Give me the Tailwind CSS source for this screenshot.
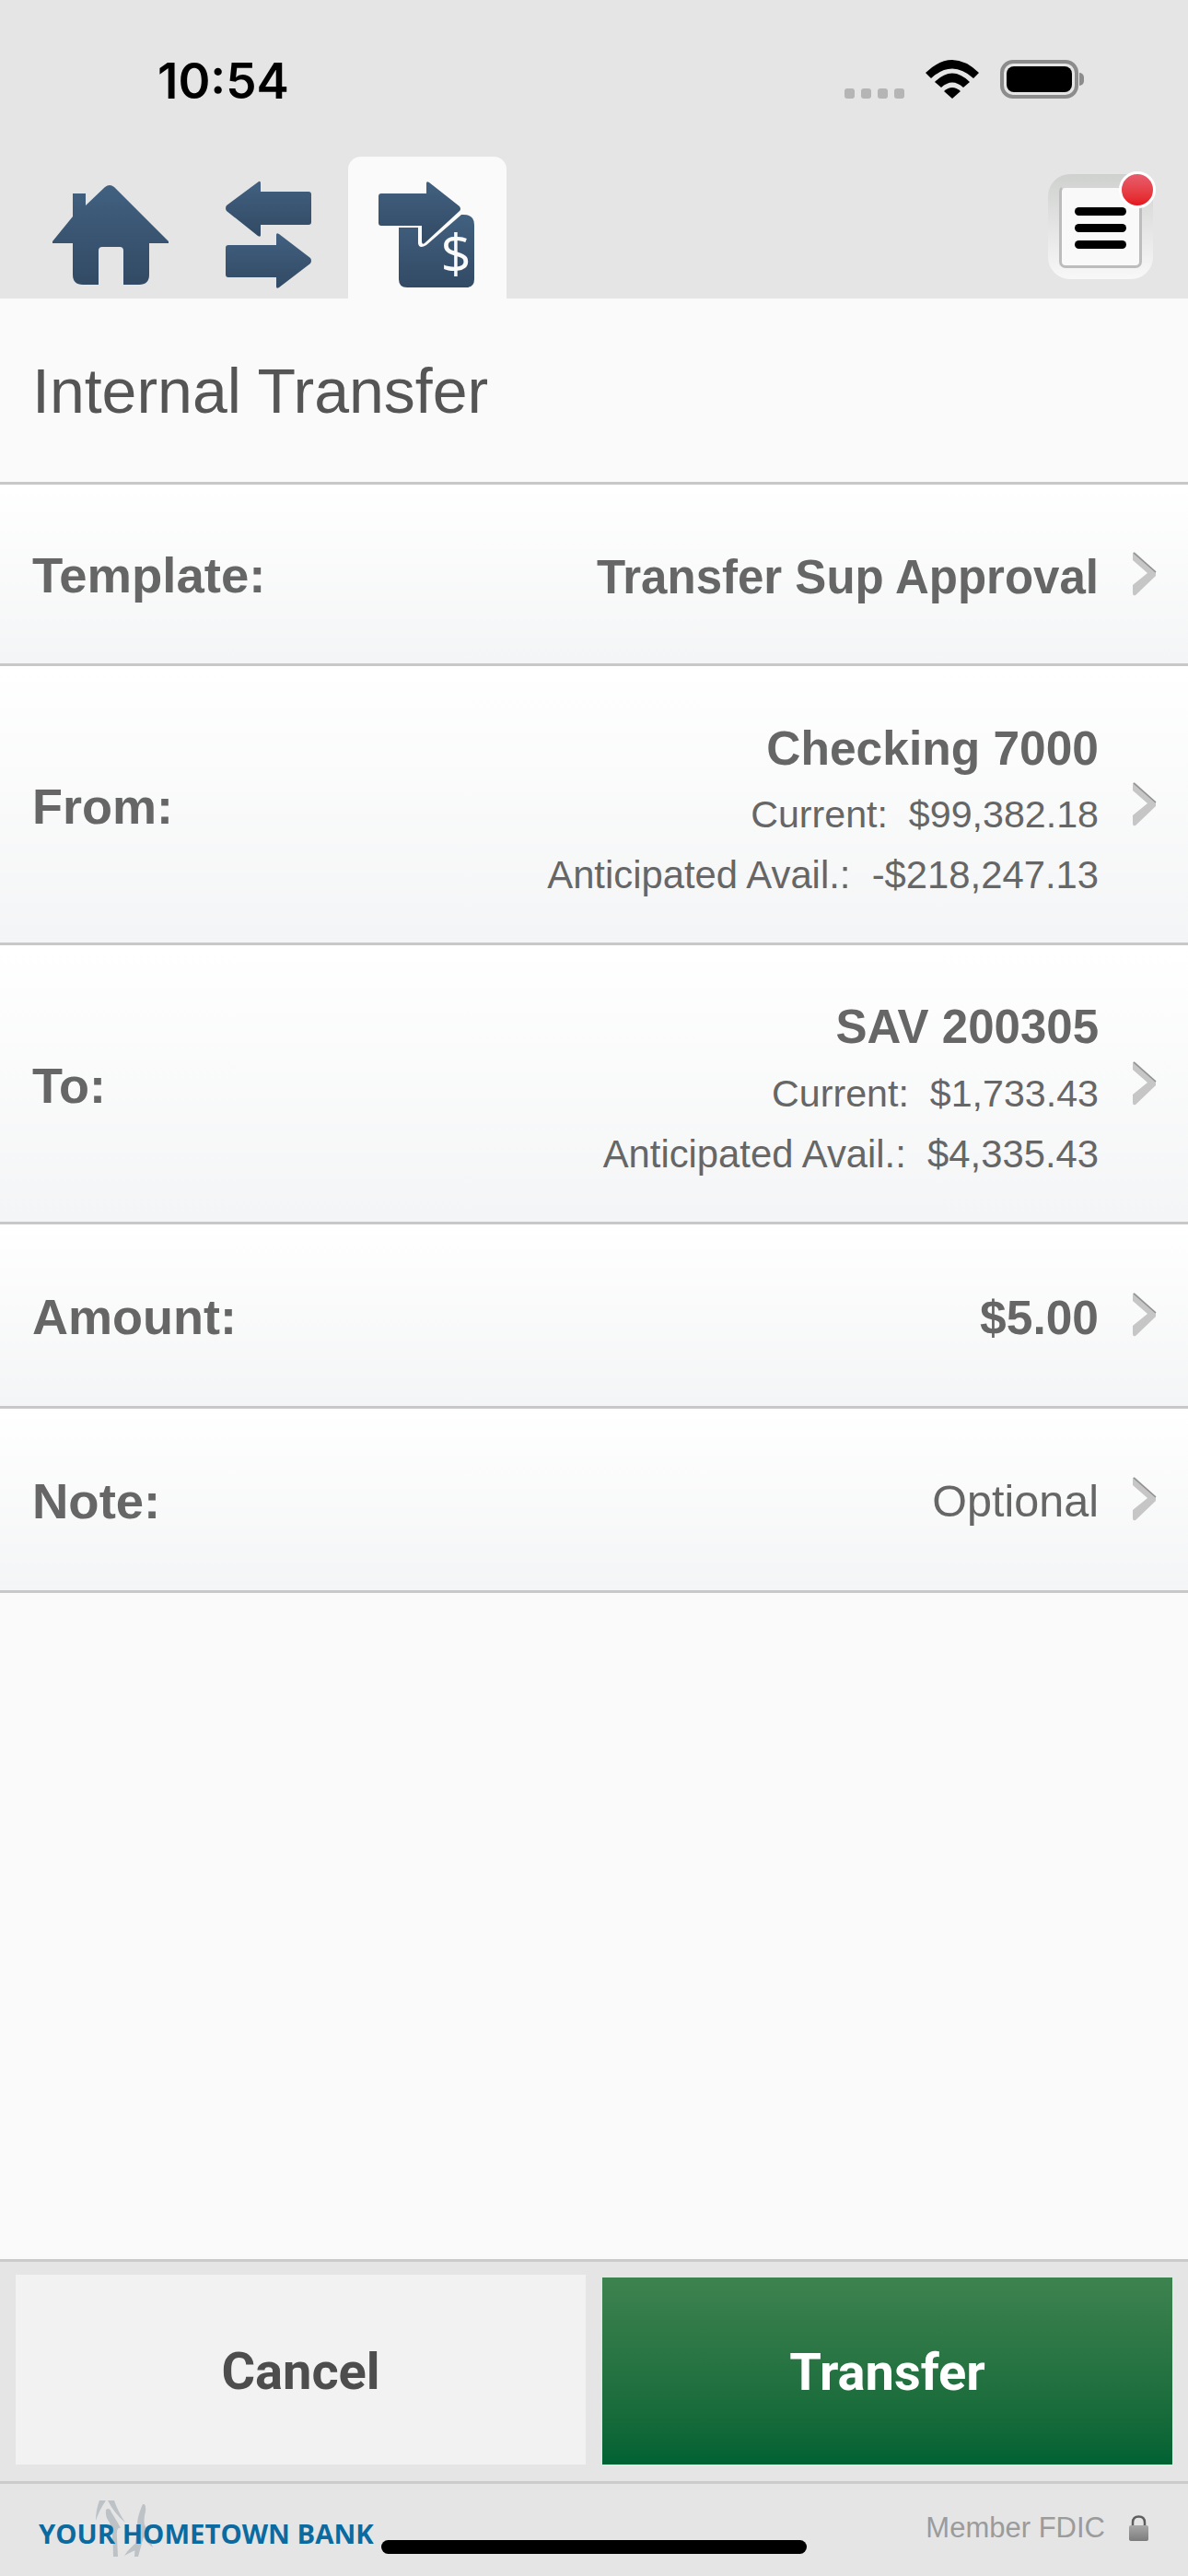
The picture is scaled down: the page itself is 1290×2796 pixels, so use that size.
<!DOCTYPE html>
<html lang="en">
<head>
  <meta charset="UTF-8" />
  <meta name="viewport" content="width=device-width, initial-scale=1.0" />
  <title>Internal Transfer</title>
  <script src="https://cdn.jsdelivr.net/npm/@tailwindcss/browser@4"></script>
</head>
<body class="font-['Liberation_Sans',Arial,sans-serif] text-[#666666] bg-[#fafafa] overflow-hidden">
<div class="relative w-[1290px] h-[2796px] flex flex-col">

  <!-- shared gradient -->
  <svg width="0" height="0" class="absolute">
    <defs>
      <linearGradient id="navy" x1="0" y1="0" x2="0" y2="1">
        <stop offset="0" stop-color="#416080" />
        <stop offset="1" stop-color="#324a64" />
      </linearGradient>
      <linearGradient id="lockfill" x1="0" y1="0" x2="0" y2="1">
        <stop offset="0" stop-color="#a8a8a8" />
        <stop offset="1" stop-color="#7c7c7c" />
      </linearGradient>
      <symbol id="chevron" viewBox="0 0 27 48">
        <path fill="#c6c6c6" d="M0 3 Q0 -1 3 1 L25 21 V26 L3 47 Q0 48 0 45 V36 L16 23 L0 9 Z" />
        <path fill="none" stroke="#909090" stroke-width="1.5" d="M1 1 L25 22" />
      </symbol>
    </defs>
  </svg>

  <!-- status bar + nav -->
  <header class="h-[324px] bg-[#e5e5e5] flex flex-col shrink-0">
    <div class="h-[178px] pl-[171px] pr-[113px] flex justify-between items-start">
      <span class="mt-[60px] font-['Inter',sans-serif] text-[53px] leading-[56px] font-semibold text-black">10:54</span>
      <div class="mt-[65px] flex items-end">
        <div class="flex gap-[7px] mb-0">
          <i class="block w-[11px] h-[11px] rounded-[3px] bg-[#b5b5b5]"></i>
          <i class="block w-[11px] h-[11px] rounded-[3px] bg-[#b5b5b5]"></i>
          <i class="block w-[11px] h-[11px] rounded-[3px] bg-[#b5b5b5]"></i>
          <i class="block w-[11px] h-[11px] rounded-[3px] bg-[#b5b5b5]"></i>
        </div>
        <svg class="ml-[23px]" width="58" height="42" viewBox="0 0 58 42">
          <path d="M0 14 Q29 -14 58 14 L52 20 Q29 -1 6 20 Z" fill="#000" />
          <path d="M10 24 Q29 5 48 24 L41 30 Q29 19 17 30 Z" fill="#000" />
          <path d="M20 34 Q29 26 38 34 L29 42 Z" fill="#000" />
        </svg>
        <div class="ml-[23px] flex items-center">
          <div class="w-[85px] h-[42px] rounded-[14px] border-[4px] border-[#8c8c8c] p-[3px]">
            <div class="w-full h-full rounded-[8px] bg-black"></div>
          </div>
          <div class="w-[5px] h-[14px] rounded-r-[5px] bg-[#8c8c8c] ml-[1px]"></div>
        </div>
      </div>
    </div>

    <nav class="flex-1 flex items-end pl-[57px] pr-[38px] relative">
      <!-- home -->
      <svg class="mb-[14px]" width="126" height="110" viewBox="0 0 126 110">
        <path fill="url(#navy)" d="M22 10 H36 V23 L57 3 Q62 -1 67 3 L126 62 V64 H105 V98 Q105 109 94 109 H77 V72 Q77 68 73 68 H54 Q50 68 50 72 V109 H33 Q22 109 22 98 V64 H0 V62 L22 35 Z" />
      </svg>
      <!-- transfers -->
      <svg class="ml-[62px] mb-[10px]" width="94" height="118" viewBox="0 0 94 118">
        <g fill="url(#navy)">
          <path d="M1 27 L36 1 Q38 0 38 3 V12 H90 Q93 12 93 15 V45 Q93 48 90 48 H38 V59 Q38 62 35 60 L1 33 Q-1 30 1 27 Z" />
          <path d="M3 70 H55 V59 Q55 56 58 58 L92 84 Q94 87 92 90 L58 116 Q55 118 55 115 V105 H3 Q0 105 0 102 V73 Q0 70 3 70 Z" />
        </g>
      </svg>
      <!-- active tab -->
      <div class="ml-[39px] w-[172px] h-[154px] bg-[#fafafa] rounded-t-[14px] flex justify-center items-end pb-[10px]">
        <svg width="106" height="118" viewBox="0 0 106 118">
          <g fill="url(#navy)">
            <path d="M3 14 H52 V3 Q52 0 55 2 L88 28 Q90 31 88 33 L50 68 Q47 70 47 66 V49 H3 Q0 49 0 46 V17 Q0 14 3 14 Z" />
            <path d="M22 51 H43 V68 Q44 75 52 70 L90 37 Q104 36 104 48 V107 Q104 116 95 116 H31 Q22 116 22 107 Z" />
          </g>
          <text x="84" y="101" text-anchor="middle" font-family="Open Sans" font-size="58" fill="#fafafa">$</text>
        </svg>
      </div>
      <!-- menu button -->
      <div class="ml-auto mb-[21px] relative w-[114px] h-[114px] rounded-[24px] bg-gradient-to-b from-[#cfd1cf] to-[#f8f8f8] p-[12px]">
        <div class="w-full h-full rounded-[7px] border-[3px] border-[#bcbcbc] border-t-[#d4d5d4] bg-[#f9f9f9] flex flex-col justify-center items-center gap-[9px] pt-[2px]">
          <i class="block w-[56px] h-[9px] rounded-full bg-black"></i>
          <i class="block w-[56px] h-[9px] rounded-full bg-black"></i>
          <i class="block w-[56px] h-[9px] rounded-full bg-black"></i>
        </div>
        <span class="absolute -top-[3px] -right-[3px] w-[40px] h-[40px] rounded-full border-[3px] border-white bg-gradient-to-b from-[#e75c6c] to-[#e5121c]"></span>
      </div>
    </nav>
  </header>

  <!-- form -->
  <main class="flex-1 flex flex-col">
    <div class="h-[202px] flex items-center px-[35px] border-b-[3px] border-[#c8c8c8] bg-[#fafafa]">
      <h1 class="text-[68px] leading-none font-normal text-[#555555]">Internal Transfer</h1>
    </div>

    <div class="h-[197px] flex items-center pt-[4px] pl-[35px] pr-[33px] border-b-[3px] border-[#c8c8c8] bg-gradient-to-b from-white to-[#f4f5f6]">
      <span class="text-[54.5px] font-bold">Template:</span>
      <span class="ml-auto mt-[4px] text-[51px] font-bold">Transfer Sup Approval</span>
      <svg class="ml-[37px] mb-[5px]" width="27" height="48"><use href="#chevron" /></svg>
    </div>

    <div class="h-[303px] flex items-center pt-[4px] pl-[35px] pr-[33px] border-b-[3px] border-[#c8c8c8] bg-gradient-to-b from-white to-[#f4f5f6]">
      <span class="text-[54px] font-bold">From:</span>
      <div class="ml-auto mt-[13px] text-right">
        <div class="text-[51.5px] leading-[60px] font-bold">Checking 7000</div>
        <div class="text-[41.2px] leading-[66px] mt-[9px] whitespace-pre">Current:  $99,382.18</div>
        <div class="text-[41.8px] leading-[65px] whitespace-pre">Anticipated Avail.:  -$218,247.13</div>
      </div>
      <svg class="ml-[37px] mb-[5px]" width="27" height="48"><use href="#chevron" /></svg>
    </div>

    <div class="h-[303px] flex items-center pt-[4px] pl-[35px] pr-[33px] border-b-[3px] border-[#c8c8c8] bg-gradient-to-b from-white to-[#f4f5f6]">
      <span class="text-[54px] font-bold">To:</span>
      <div class="ml-auto mt-[13px] text-right">
        <div class="text-[51px] leading-[60px] font-bold">SAV 200305</div>
        <div class="text-[41.2px] leading-[66px] mt-[9px] whitespace-pre">Current:  $1,733.43</div>
        <div class="text-[41.8px] leading-[65px] whitespace-pre">Anticipated Avail.:  $4,335.43</div>
      </div>
      <svg class="ml-[37px] mb-[5px]" width="27" height="48"><use href="#chevron" /></svg>
    </div>

    <div class="h-[200px] flex items-center pt-[4px] pl-[35px] pr-[33px] border-b-[3px] border-[#c8c8c8] bg-gradient-to-b from-white to-[#f4f5f6]">
      <span class="text-[54px] font-bold">Amount:</span>
      <span class="ml-auto mt-[2px] text-[51.5px] font-bold">$5.00</span>
      <svg class="ml-[37px] mb-[5px]" width="27" height="48"><use href="#chevron" /></svg>
    </div>

    <div class="h-[200px] flex items-center pt-[4px] pl-[35px] pr-[33px] border-b-[3px] border-[#c8c8c8] bg-gradient-to-b from-white to-[#f4f5f6]">
      <span class="text-[54.5px] font-bold">Note:</span>
      <span class="ml-auto text-[48.5px]">Optional</span>
      <svg class="ml-[37px] mb-[5px]" width="27" height="48"><use href="#chevron" /></svg>
    </div>
  </main>

  <!-- actions -->
  <div class="h-[244px] shrink-0 bg-[#e5e5e5] border-y-[3px] border-[#cbcbcb] pl-[17px] pr-[17px] flex gap-[18px] pt-[14px] font-['Roboto',sans-serif] text-[56px] font-bold">
    <button class="w-[619px] h-[206px] pt-[3px] bg-[#f2f2f2] text-[#4d4d4d]">Cancel</button>
    <button class="w-[619px] h-[203px] mt-[3px] pt-[3px] text-white bg-gradient-to-b from-[#3d8350] to-[#006233]">Transfer</button>
  </div>

  <!-- footer -->
  <footer class="h-[100px] shrink-0 bg-[#e5e5e5] relative flex items-start pl-[42px] pr-[43px]">
    <svg class="absolute left-[100px] top-[18px]" width="70" height="62" viewBox="0 0 70 62">
      <g fill="#bcc2c6">
        <path d="M8 0 H15 Q8 10 4 22 Q4 10 8 0 Z" />
        <path d="M17 0 H24 Q28 12 36 24 Q24 14 17 0 Z" />
        <path d="M15 10 Q19 7 21 13 Q28 24 31 30 Q26 28 27 40 L28 61 H23 Q23 36 19 24 Q14 18 15 10 Z" />
        <path d="M55 4 Q59 3 58 12 Q55 22 58 32 L53 50 L50 61 H46 Q47 40 50 30 Q47 22 55 4 Z" />
        <path d="M35 60 Q40 52 48 46 L47 54 Q42 56 35 60 Z" />
        <path d="M57 26 Q62 40 66 51 Q56 44 54 34 Z" />
      </g>
    </svg>
    <span class="relative mt-[38px] font-['Open_Sans',sans-serif] text-[29.3px] leading-[32px] font-bold text-[#0b6a9f]">YOUR HOMETOWN BANK</span>
    <span class="ml-auto mt-[31px] text-[31px] leading-[34px] text-[#9b9b9b]">Member FDIC</span>
    <svg class="ml-[26px] mt-[34px]" width="21" height="28" viewBox="0 0 21 28">
      <path d="M4 13 V8 Q4 1.5 10.5 1.5 Q17 1.5 17 8 V13" fill="none" stroke="#5e5e5e" stroke-width="2.5" />
      <rect x="0" y="11" width="21" height="17" rx="2" fill="url(#lockfill)" />
    </svg>
  </footer>

  <!-- home indicator -->
  <div class="absolute left-[414px] top-[2757px] w-[462px] h-[15px] rounded-full bg-black"></div>
</div>
</body>
</html>
